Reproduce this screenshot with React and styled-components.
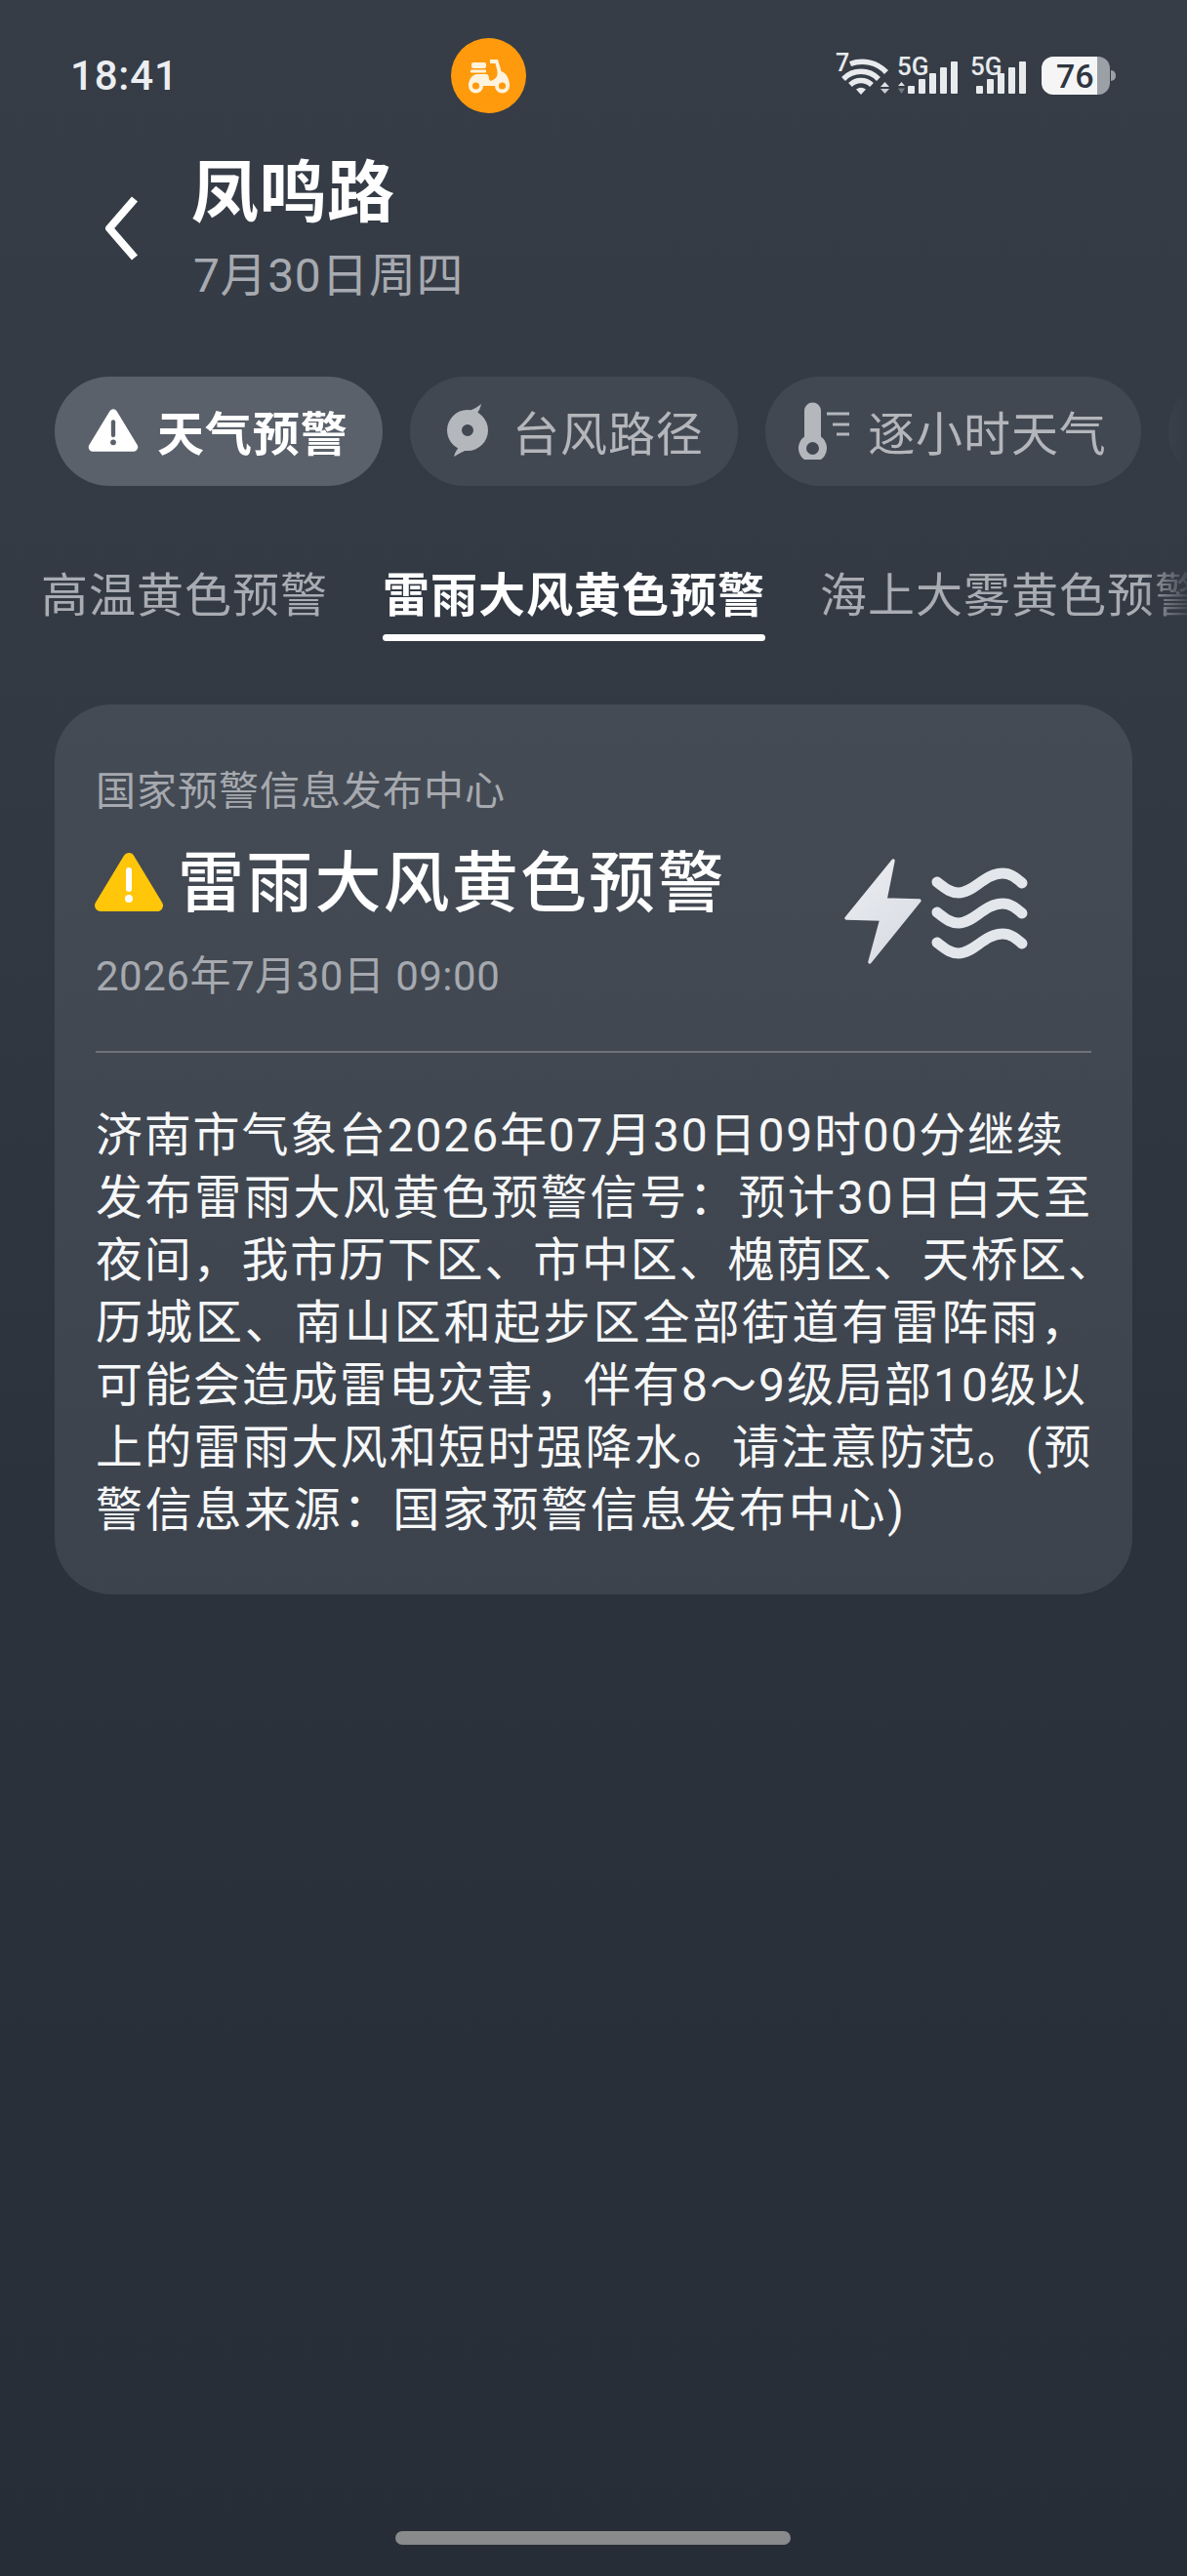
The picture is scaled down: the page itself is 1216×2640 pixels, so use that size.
import React from "react";
import styled, { createGlobalStyle } from "styled-components";

const GlobalStyle = createGlobalStyle`
  html, body {
    margin: 0;
    padding: 0;
    background: #262d37;
  }

  * {
    box-sizing: border-box;
  }
`;

const Page = styled.div`
  display: flex;
  flex-direction: column;
  width: 1216px;
  height: 2640px;
  overflow: hidden;
  background: linear-gradient(180deg, #363d47 0%, #323943 30%, #2b323c 60%, #262d37 100%);
  font-family: Roboto, "Noto Sans CJK SC", sans-serif;
`;

const StatusBar = styled.div`
  display: grid;
  grid-template-columns: 390px 77px 1fr;
  align-items: center;
  height: 77px;
  margin-top: 39px;
  padding: 0 72px 0 72px;
`;

const Time = styled.div`
  color: #eceef1;
  font-size: 42px;
  font-weight: 500;
  letter-spacing: 0.8px;
`;

const Badge = styled.div`
  display: flex;
  align-items: center;
  justify-content: center;
  width: 77px;
  height: 77px;
  border-radius: 50%;
  background: #ff9a0d;
`;

const StatusIcons = styled.div`
  display: flex;
  align-items: center;
  justify-content: flex-end;
`;

const IconText = styled.text`
  fill: #e8eaed;
  font-family: Roboto, sans-serif;
  font-weight: 500;
`;

const Battery = styled.div`
  position: relative;
  display: flex;
  align-items: center;
  width: 70px;
  height: 39px;
  margin-right: 7px;
  padding-left: 15px;
  border-radius: 12px;
  background: linear-gradient(90deg, #f5f5f6 81%, #9b9fa6 81%);
  color: #2f3640;
  font-size: 34px;
  font-weight: 500;

  &::after {
    content: "";
    position: absolute;
    left: 71px;
    top: 14px;
    width: 5px;
    height: 11px;
    border-radius: 0 5px 5px 0;
    background: #9b9fa6;
  }
`;

const Header = styled.div`
  display: flex;
  align-items: flex-start;
  margin-top: 40px;
  padding-left: 107px;
`;

const BackIcon = styled.svg`
  width: 36px;
  height: 68px;
  margin-top: 44px;
  margin-right: 53px;
`;

const Titles = styled.div`
  display: flex;
  flex-direction: column;
`;

const Title = styled.div`
  margin-top: 3px;
  color: #fff;
  font-size: 69px;
  font-weight: 700;
  line-height: 80px;
  letter-spacing: 0.5px;
`;

const SubTitle = styled.div`
  margin: 16px 0 0 2px;
  color: #a7aab0;
  font-size: 48px;
  line-height: 56px;
  letter-spacing: 0.6px;
`;

const Pills = styled.div`
  display: flex;
  gap: 28px;
  margin-top: 75px;
  padding-left: 56px;
  mask-image: linear-gradient(90deg, #000 calc(100% - 40px), transparent);
`;

const Pill = styled.div`
  display: flex;
  flex: none;
  align-items: center;
  gap: 19px;
  height: 112px;
  min-width: 120px;
  padding: 0 35.5px 2px 34px;
  border-radius: 56px;
  background: ${({ $active }) => ($active ? "#5a616b" : "#414851")};
  color: ${({ $active }) => ($active ? "#fff" : "#b4b6bb")};
  font-size: 48px;
  font-weight: ${({ $active }) => ($active ? 700 : 400)};
  letter-spacing: 0.9px;
`;

const PillIcon = styled.svg`
  flex: none;
  width: 52px;
  height: 60px;
`;

const Tabs = styled.div`
  display: flex;
  gap: 56px;
  margin-top: 83px;
  padding-left: 42px;
  white-space: nowrap;
  mask-image: linear-gradient(90deg, #000 calc(100% - 45px), rgba(0, 0, 0, 0.15));
`;

const Tab = styled.div`
  position: relative;
  flex: none;
  padding-bottom: 16px;
  color: ${({ $active }) => ($active ? "#fff" : "#a9acb2")};
  font-size: 48px;
  font-weight: ${({ $active }) => ($active ? 700 : 400)};
  line-height: 60px;
  letter-spacing: 1px;

  &::after {
    content: "";
    display: ${({ $active }) => ($active ? "block" : "none")};
    position: absolute;
    left: 0;
    right: 0;
    bottom: 0;
    height: 7px;
    border-radius: 4px;
    background: #fff;
  }
`;

const Card = styled.div`
  width: 1104px;
  margin: 65px 0 0 56px;
  padding: 61px 42px 54px 42px;
  border-radius: 58px;
  background: linear-gradient(180deg, #444b54 0%, #3c434d 100%);
`;

const CardHead = styled.div`
  display: flex;
  align-items: flex-start;
  justify-content: space-between;
`;

const CardInfo = styled.div`
  display: flex;
  flex-direction: column;
`;

const Source = styled.div`
  color: #a6a9af;
  font-size: 41px;
  line-height: 56px;
  letter-spacing: 1px;
`;

const AlertRow = styled.div`
  display: flex;
  align-items: center;
  gap: 14px;
  margin-top: 25px;
  margin-left: -2px;
`;

const AlertIcon = styled.svg`
  flex: none;
  width: 72px;
  height: 64px;
  margin-bottom: 4px;
`;

const AlertTitle = styled.div`
  color: #fff;
  font-size: 68px;
  font-weight: 500;
  line-height: 84px;
  letter-spacing: 2.2px;
`;

const DateText = styled.div`
  margin-top: 25px;
  color: #a6a9af;
  font-size: 42px;
  line-height: 56px;
  letter-spacing: 0.5px;
`;

const WeatherIcon = styled.svg`
  flex: none;
  width: 196px;
  height: 115px;
  margin-top: 92px;
  margin-right: 62px;
`;

const Divider = styled.div`
  height: 2px;
  margin-top: 48px;
  background: rgba(255, 255, 255, 0.24);
`;

const Body = styled.div`
  margin-top: 53px;
  color: #f6f7f8;
  font-size: 48px;
  line-height: 64px;
`;

const BodyLine = styled.div`
  white-space: nowrap;
  letter-spacing: ${({ $spacing }) => $spacing}px;
`;

const Spacer = styled.div`
  flex: 1;
`;

const HomeBar = styled.div`
  flex: none;
  width: 405px;
  height: 14px;
  margin: 0 0 32px 405px;
  border-radius: 7px;
  background: #888a8b;
`;

// the reference justifies most lines, so each one carries its own spacing
const bodyLines = [
  { text: "济南市气象台2026年07月30日09时00分继续", spacing: 1.8 },
  { text: "发布雷雨大风黄色预警信号：预计30日白天至", spacing: 2.65 },
  { text: "夜间，我市历下区、市中区、槐荫区、天桥区、", spacing: 1.8 },
  { text: "历城区、南山区和起步区全部街道有雷阵雨，", spacing: 2.95 },
  { text: "可能会造成雷电灾害，伴有8～9级局部10级以", spacing: 2 },
  { text: "上的雷雨大风和短时强降水。请注意防范。(预", spacing: 2.15 },
  { text: "警信息来源：国家预警信息发布中心)", spacing: 2.7 },
];

const ScooterIcon = () => (
  <svg width="44" height="38" viewBox="0 0 44 38">
    <rect x="4" y="5" width="15" height="6" rx="2" fill="#fff3dd" />
    <rect x="3" y="12.5" width="16" height="3" rx="1" fill="#fff3dd" />
    <path
      d="M1 29C1 22 5 17 10 17H19C21 17 22 19 22 22C22 24 24 24 26 23C30 21 31 18 30.5 14L28.5 6H23V2H31L34.5 14C40 16 43 22 43 29Z"
      fill="#fff3dd"
    />
    <circle cx="8.5" cy="29" r="7.5" fill="#fff3dd" />
    <circle cx="8.5" cy="29" r="3.6" fill="#ff9a0d" />
    <circle cx="35.5" cy="29" r="7.5" fill="#fff3dd" />
    <circle cx="35.5" cy="29" r="3.6" fill="#ff9a0d" />
  </svg>
);

const WifiIcon = () => (
  <svg width="64" height="60" viewBox="0 -8 64 60">
    <IconText x="1" y="17" fontSize="25">
      7
    </IconText>
    <g fill="none" stroke="#e8eaed" strokeWidth="5.5">
      <path d="M16 9.5A34 34 0 0 1 53 18" />
      <path d="M9 25A25 25 0 0 1 45 25" />
      <path d="M16 31A16 16 0 0 1 38 31" />
    </g>
    <path d="M22 35.5A9 9 0 0 1 32 35.5L27 41Z" fill="#e8eaed" />
    <path d="M47 33L51.5 28L56 33Z" fill="#dfe1e4" />
    <path d="M47 35L51.5 40L56 35Z" fill="#c9ccd0" />
  </svg>
);

const SignalBars = ({ x }) => (
  <g fill="#e8eaed">
    {[8, 15, 21, 27, 33].map((h, i) => (
      <rect key={i} x={x + i * 11} y={40 - h} width="7" height={h} rx="1" />
    ))}
  </g>
);

const SignalIcon = ({ x, arrows, width }) => (
  <svg width={width} height="60" viewBox={`0 -8 ${width} 60`}>
    <IconText x="0" y="21" fontSize="26">
      5G
    </IconText>
    {arrows && (
      <g>
        <path d="M1 32L4.5 28L8 32Z" fill="#dfe1e4" />
        <path d="M1 34.5L4.5 40L8 34.5Z" fill="#737881" />
      </g>
    )}
    <SignalBars x={x} />
  </svg>
);

const WarningShape = ({ fill, mark }) => (
  <>
    <path
      d="M36 8L65 56H7Z"
      fill={fill}
      stroke={fill}
      strokeWidth="12"
      strokeLinejoin="round"
    />
    <path d="M36 20V39" stroke={mark} strokeWidth="6" strokeLinecap="round" />
    <circle cx="36" cy="49" r="4" fill={mark} />
  </>
);

const TyphoonIcon = () => (
  <PillIcon viewBox="0 0 52 60">
    <path
      fillRule="evenodd"
      d="M25 9A21 21 0 1 1 25 51A21 21 0 1 1 25 9ZM25 24A6 6 0 1 0 25 36A6 6 0 1 0 25 24Z"
      fill="#b4b7bc"
    />
    <path d="M12 14C22 12 30 10 39 3C38 8 36 12 31 16Z" fill="#b4b7bc" />
    <path d="M37 46C28 48 21 51 11 57C12 52 15 48 19 44Z" fill="#b4b7bc" />
  </PillIcon>
);

const ThermometerIcon = () => (
  <PillIcon viewBox="0 0 52 60">
    <path
      fillRule="evenodd"
      d="M6 10A8.500 8.500 0 0 1 23 10V36.500A14.500 14.500 0 1 1 6 36.500ZM14.500 42A6.500 6.500 0 1 0 14.500 55A6.500 6.500 0 1 0 14.500 42Z"
      fill="#b4b7bc"
    />
    <path
      d="M29 13H52M35 24H52M39 34H52"
      stroke="#b4b7bc"
      strokeWidth="3"
      fill="none"
    />
  </PillIcon>
);

const StormIcon = () => (
  <WeatherIcon viewBox="40 25 196 115">
    <defs>
      <linearGradient id="storm" x1="0" y1="0" x2="0.6" y2="1">
        <stop offset="0" stopColor="#eceef2" />
        <stop offset="1" stopColor="#d9dce3" />
      </linearGradient>
    </defs>
    <path
      d="M95 32L47 91L83 92L71 136L122 73L87 72Z"
      fill="url(#storm)"
      stroke="url(#storm)"
      strokeWidth="3.500"
      strokeLinejoin="round"
    />
    <g fill="none" stroke="#e3e6eb" strokeWidth="11" strokeLinecap="round">
      <path d="M140 54C150 62 155 65 162 65C177 65 189 45 207 45C215 45 220 49 227 55" />
      <path d="M140 85C150 93 155 96 162 96C177 96 189 76 207 76C215 76 220 80 227 86" />
      <path d="M140 116C150 124 155 127 162 127C177 127 189 107 207 107C215 107 220 111 227 117" />
    </g>
  </WeatherIcon>
);

const App = () => {
  return (
    <Page>
      <GlobalStyle />
      <StatusBar>
        <Time>18:41</Time>
        <Badge>
          <ScooterIcon />
        </Badge>
        <StatusIcons>
          <WifiIcon />
          <SignalIcon x={11} arrows width={75} />
          <SignalIcon x={6} width={73} />
          <Battery>76</Battery>
        </StatusIcons>
      </StatusBar>

      <Header>
        <BackIcon viewBox="0 0 36 68">
          <path
            d="M31 4L5 34L31 64"
            fill="none"
            stroke="#fff"
            strokeWidth="8"
            strokeLinejoin="round"
          />
        </BackIcon>
        <Titles>
          <Title>凤鸣路</Title>
          <SubTitle>7月30日周四</SubTitle>
        </Titles>
      </Header>

      <Pills>
        <Pill $active>
          <PillIcon viewBox="0 0 72 64">
            <WarningShape fill="#fff" mark="#5a616b" />
          </PillIcon>
          天气预警
        </Pill>
        <Pill>
          <TyphoonIcon />
          台风路径
        </Pill>
        <Pill>
          <ThermometerIcon />
          逐小时天气
        </Pill>
        <Pill />
      </Pills>

      <Tabs>
        <Tab>高温黄色预警</Tab>
        <Tab $active>雷雨大风黄色预警</Tab>
        <Tab>海上大雾黄色预警</Tab>
      </Tabs>

      <Card>
        <CardHead>
          <CardInfo>
            <Source>国家预警信息发布中心</Source>
            <AlertRow>
              <AlertIcon viewBox="0 0 72 64">
                <WarningShape fill="#ffc60a" mark="#fff" />
              </AlertIcon>
              <AlertTitle>雷雨大风黄色预警</AlertTitle>
            </AlertRow>
            <DateText>2026年7月30日 09:00</DateText>
          </CardInfo>
          <StormIcon />
        </CardHead>
        <Divider />
        <Body>
          {bodyLines.map(({ text, spacing }, idx) => (
            <BodyLine key={idx} $spacing={spacing}>
              {text}
            </BodyLine>
          ))}
        </Body>
      </Card>

      <Spacer />
      <HomeBar />
    </Page>
  );
};

export default App;
